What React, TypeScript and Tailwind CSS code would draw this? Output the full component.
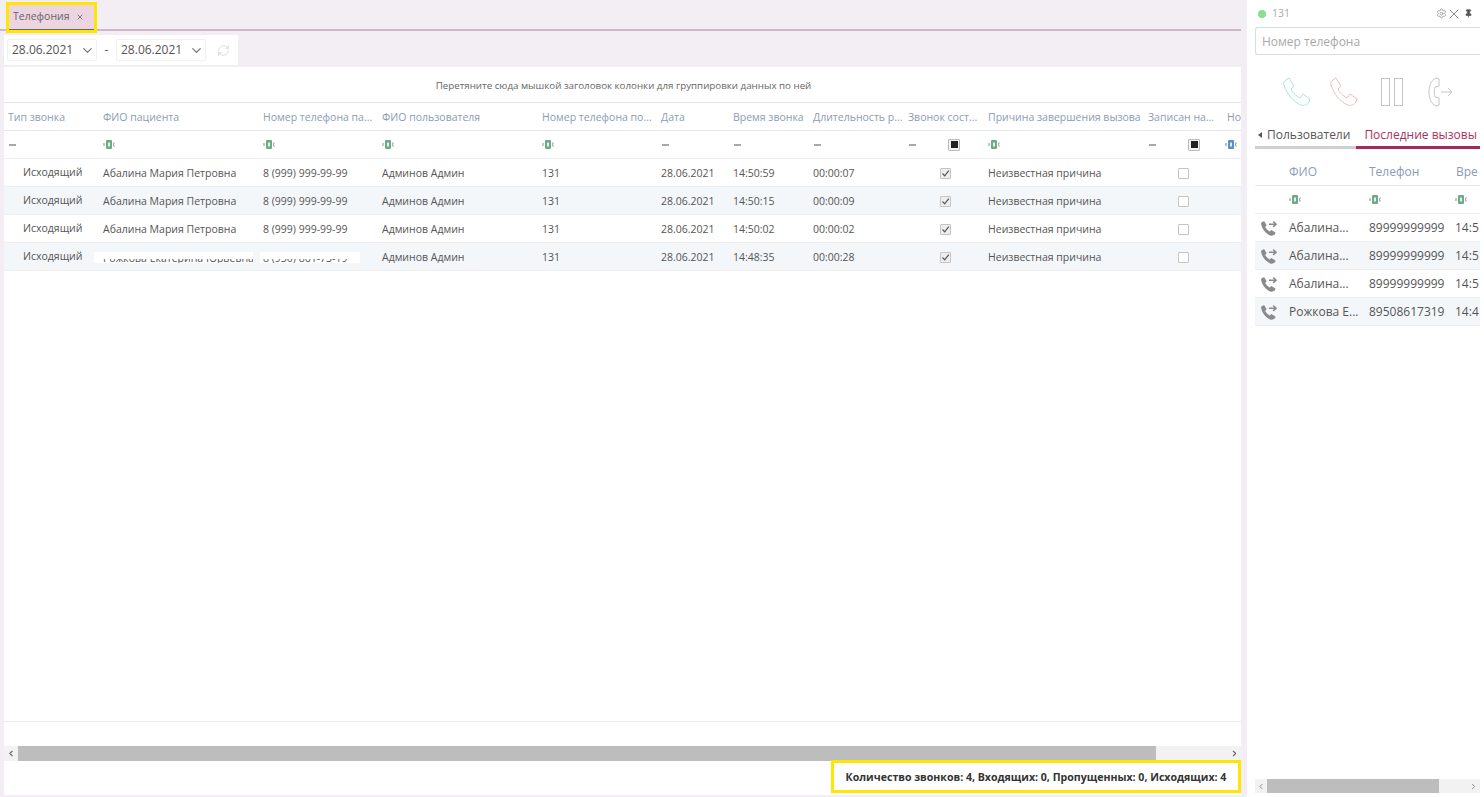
import React from 'react';
import { ChevronDown, ChevronLeft, ChevronRight, Pin, RefreshCw, Settings, X } from 'lucide-react';

const cols = 'grid grid-cols-[95px_160px_119px_160px_119px_72px_80px_95px_80px_160px_79px_60px]';
const sideCols = 'grid grid-cols-[30px_80px_88px_40px]';

const headers = [
  'Тип звонка', 'ФИО пациента', 'Номер телефона па...', 'ФИО пользователя', 'Номер телефона по...', 'Дата',
  'Время звонка', 'Длительность р...', 'Звонок сост...', 'Причина завершения вызова', 'Записан на...', 'Но',
];

const calls = [
  { name: 'Абалина Мария Петровна', phone: '8 (999) 999-99-99', time: '14:50:59', len: '00:00:07' },
  { name: 'Абалина Мария Петровна', phone: '8 (999) 999-99-99', time: '14:50:15', len: '00:00:09' },
  { name: 'Абалина Мария Петровна', phone: '8 (999) 999-99-99', time: '14:50:02', len: '00:00:02' },
  { name: 'Рожкова Екатерина Юрьевна', phone: '8 (950) 861-73-19', time: '14:48:35', len: '00:00:28', hidden: true },
];

const recent = [
  { name: 'Абалина...', phone: '89999999999', time: '14:5' },
  { name: 'Абалина...', phone: '89999999999', time: '14:5' },
  { name: 'Абалина...', phone: '89999999999', time: '14:5' },
  { name: 'Рожкова Е...', phone: '89508617319', time: '14:4' },
];

// little "abc" filter glyph
const AbcIcon = ({ color = '#6fa98c' }: { color?: string }) => (
  <svg width="13" height="9" viewBox="0 0 13 9" className="block">
    <rect x="0" y="3" width="2" height="3" fill={color} opacity="0.55" />
    <rect x="3" y="0" width="6" height="9" rx="1" fill={color} />
    <rect x="5" y="2.5" width="2" height="4" fill="#dff0e8" />
    <path d="M12 3 H10.5 V6 H12" fill="none" stroke="#999" strokeWidth="0.8" />
  </svg>
);

const HANDSET = 'M2 8 C1 6 2 4 4 3 L7 1 L12 9 L9 12 C10 15 14 19 18 21 L21 17 L28 22 L27 25 C25 28 22 29 19 28 C11 25 5 17 2 8 Z';

const Handset = ({ color }: { color: string }) => (
  <svg width="30" height="30" viewBox="0 0 30 30" className="block">
    <path d={HANDSET} fill="none" stroke={color} strokeWidth="1" strokeLinejoin="round" />
  </svg>
);

const OutgoingIcon = () => (
  <svg width="18" height="16" viewBox="0 0 30 27" className="block">
    <path d="M2 8 C1 6 2 4 4 3 L7 2 L11 9 L8.5 12 C10 15 13 18 16 19.5 L19 17 L26 21 L25 24 C23 26 20 27 17 26 C10 23 4 16 2 8 Z" fill="#8a8a8a" />
    <path d="M15 7 H26 M22 2.5 L27 7 L22 11.5" fill="none" stroke="#8a8a8a" strokeWidth="2.6" />
  </svg>
);

const Dash = () => <span className="block h-[2px] w-[7px] bg-[#a8a8a8]" />;

const FilterBox = () => (
  <span className="flex h-[12px] w-[12px] items-center justify-center rounded-[1px] border border-[#bbb] bg-[#f4f4f4]">
    <span className="h-[7px] w-[7px] bg-[#222]" />
  </span>
);

const CheckBox = ({ checked }: { checked?: boolean }) => (
  <span className={`-mt-[1px] flex h-[11px] w-[11px] items-center justify-center rounded-[1px] border border-[#c4c4c4] ${checked ? 'bg-[#eeeeee]' : 'bg-white'}`}>
    {checked && (
      <svg width="9" height="9" viewBox="0 0 9 9">
        <path d="M1.5 4.5 L3.7 6.8 L7.8 1.6" fill="none" stroke="#555" strokeWidth="1.2" />
      </svg>
    )}
  </span>
);

// row where the patient data was painted over in the screenshot
const Masked = ({ text, className }: { text: string; className: string }) => (
  <span className={`relative block h-[11px] overflow-hidden bg-white leading-[13px] whitespace-nowrap ${className}`}>
    {text}
    <span className="absolute inset-x-0 top-0 h-[7px] bg-white" />
  </span>
);

const DateField = ({ value }: { value: string }) => (
  <div className="flex h-[22px] w-[90px] items-center justify-between rounded-[2px] border border-[#f1f1f1] pr-[1px] pl-[4px] text-[12px] text-[#555]">
    {value}
    <ChevronDown size={15} strokeWidth={2} className="text-[#777]" />
  </div>
);

export default function App() {
  return (
    <div className="flex h-[797px] w-[1484px] overflow-hidden bg-[#f3eef4] font-['Open_Sans',sans-serif] text-[10.5px] text-[#555]">
      {/* main area */}
      <div className="flex w-[1241px] flex-col">
        <div className="h-[31px] shrink-0 border-b-2 border-[#cbb9c9] pt-[2px] pl-[6px]">
          <div className="relative z-10 flex h-[31px] w-[91px] items-center gap-[6px] border-[3px] border-[#ffe600] bg-[#ecd5e0] pb-[2px] pl-[4px] text-[10.5px] text-[#666] shadow-[inset_0_-1px_0_#666]">
            Телефония
            <X size={8} strokeWidth={3} className="text-[#777]" />
          </div>
        </div>

        <div className="mt-[4px] ml-[4px] flex h-[30px] w-[234px] shrink-0 items-center bg-white pl-[3px]">
          <DateField value="28.06.2021" />
          <span className="w-[19px] text-center text-[12px]">-</span>
          <DateField value="28.06.2021" />
          <RefreshCw size={13} strokeWidth={1.5} className="ml-[11px] text-[#d4d4d4]" />
        </div>

        <div className="mt-[2px] ml-[4px] flex min-h-0 flex-1 flex-col overflow-hidden bg-white">
          <div className="flex h-[36px] shrink-0 items-center justify-center border-b border-[#e6e6e6] pt-[3px] pl-[2px] text-[9.75px] text-[#666]">
            Перетяните сюда мышкой заголовок колонки для группировки данных по ней
          </div>

          <div className={`${cols} h-[28px] shrink-0 items-center border-b border-[#e8e8e8] pt-[2px] text-[#8c9cb6]`}>
            {headers.map((h, i) => (
              <div key={i} className="pl-[4px] whitespace-nowrap">{h}</div>
            ))}
          </div>

          <div className={`${cols} h-[28px] shrink-0 items-center border-b border-[#eeeeee]`}>
            <div className="pl-[5px]"><Dash /></div>
            <div className="pl-[4px]"><AbcIcon /></div>
            <div className="pl-[4px]"><AbcIcon /></div>
            <div className="pl-[4px]"><AbcIcon /></div>
            <div className="pl-[4px]"><AbcIcon /></div>
            <div className="pl-[5px]"><Dash /></div>
            <div className="pl-[5px]"><Dash /></div>
            <div className="pl-[5px]"><Dash /></div>
            <div className="flex items-center pl-[5px]"><Dash /><span className="ml-[32px]"><FilterBox /></span></div>
            <div className="pl-[4px]"><AbcIcon /></div>
            <div className="flex items-center pl-[5px]"><Dash /><span className="ml-[32px]"><FilterBox /></span></div>
            <div className="pl-[2px]"><AbcIcon color="#5b8fc9" /></div>
          </div>

          {calls.map((c, i) => (
            <div key={i} className={`${cols} h-[28px] shrink-0 items-center border-b border-[#eeeeee] pt-[2px] ${i % 2 ? 'bg-[#f3f7fa]' : 'bg-white'}`}>
              <div className="-mt-[1px] pl-[19px]">Исходящий</div>
              <div className="pl-[4px] whitespace-nowrap">
                {c.hidden ? <Masked text={c.name} className="-ml-[9px] w-[159px] pl-[9px]" /> : c.name}
              </div>
              <div className="pl-[4px] whitespace-nowrap">
                {c.hidden ? <Masked text={c.phone} className="-ml-[3px] w-[100px] pl-[3px]" /> : c.phone}
              </div>
              <div className="pl-[4px]">Админов Админ</div>
              <div className="pl-[4px]">131</div>
              <div className="pl-[4px]">28.06.2021</div>
              <div className="pl-[4px]">{c.time}</div>
              <div className="pl-[4px]">{c.len}</div>
              <div className="flex justify-center pl-[3px]"><CheckBox checked /></div>
              <div className="pl-[4px]">Неизвестная причина</div>
              <div className="flex justify-center"><CheckBox /></div>
              <div />
            </div>
          ))}

          <div className="flex-1" />

          <div className="h-[25px] shrink-0 border-t border-[#ececec]" />

          <div className="flex h-[15px] shrink-0 items-center bg-[#f2f2f2]">
            <ChevronLeft size={9} strokeWidth={3} className="mx-[2px] w-[10px] text-[#666]" />
            <div className="h-full w-[1138px] bg-[#bdbdbd]" />
            <div className="flex-1" />
            <ChevronRight size={9} strokeWidth={3} className="mr-[2px] text-[#666]" />
          </div>

          <div className="flex h-[34px] shrink-0 justify-end">
            <div className="-mt-[1px] flex h-[33px] w-[410px] items-center justify-center border-[3px] border-[#ffe600] pt-[3px] text-[10.6px] font-bold text-[#333]">
              Количество звонков: 4, Входящих: 0, Пропущенных: 0, Исходящих: 4
            </div>
          </div>
        </div>
        <div className="h-[2px] shrink-0" />
      </div>

      {/* softphone panel */}
      <div className="ml-[6px] flex w-[237px] flex-col bg-white pr-[4px] pl-[8px]">
        <div className="flex h-[27px] shrink-0 items-center pl-[3px]">
          <span className="h-[8px] w-[8px] rounded-full bg-[#86e08d]" />
          <span className="ml-[6px] text-[10.5px] text-[#aaa]">131</span>
          <span className="mr-[7px] ml-auto flex items-center text-[#888]">
            <Settings size={11} strokeWidth={1.5} />
            <X size={16} strokeWidth={1.5} className="mx-[-1px]" />
            <Pin size={9} fill="currentColor" className="ml-[3px] text-[#555]" />
          </span>
        </div>

        <div className="flex h-[28px] shrink-0 items-center rounded-l-[3px] border-y border-l border-[#dcdcdc] pt-[2px] pl-[6px] text-[12px] text-[#a8a8a8]">
          Номер телефона
        </div>

        <div className="flex h-[52px] shrink-0 items-center pt-[22px] pl-[27px]">
          <Handset color="#a6e6da" />
          <span className="ml-[17px]"><Handset color="#f5bcb5" /></span>
          <span className="ml-[22px] flex gap-[4px]">
            <span className="h-[28px] w-[9px] border border-[#c6c6c6]" />
            <span className="h-[28px] w-[9px] border border-[#c6c6c6]" />
          </span>
          <svg width="26" height="30" viewBox="0 0 26 30" className="ml-[25px]">
            <path d="M8 1 C3 3 1 9 1 15 C1 21 3 27 8 29 L11 28 L11 21 L7 20 C6 17 6 13 7 10 L11 9 L11 2 Z" fill="none" stroke="#c6c6c6" strokeWidth="1" />
            <path d="M13 15 H24 M20 11 L24 15 L20 19" fill="none" stroke="#c6c6c6" strokeWidth="1" />
          </svg>
        </div>

        <div className="mt-[18px] flex h-[21px] shrink-0 items-center overflow-hidden pb-[2px] text-[12px] whitespace-nowrap">
          <span className="ml-[3px] h-0 w-0 border-y-[3.5px] border-r-[4px] border-y-transparent border-r-[#555]" />
          <span className="ml-[5px] text-[#555]">Пользователи</span>
          <span className="ml-[14px] text-[#a8325f]">Последние вызовы</span>
        </div>
        <div className="flex h-[3px] shrink-0">
          <div className="w-[101px] bg-[#cfcfcf]" />
          <div className="flex-1 bg-[#a32a5b]" />
        </div>

        <div className={`${sideCols} mt-[10px] h-[27px] shrink-0 items-center overflow-hidden border-b border-[#e8e8e8] text-[12px] whitespace-nowrap text-[#8c9cb6]`}>
          <div />
          <div className="pl-[4px]">ФИО</div>
          <div className="pl-[4px]">Телефон</div>
          <div className="pl-[3px]">Вре</div>
        </div>
        <div className={`${sideCols} h-[28px] shrink-0 items-center border-b border-[#eeeeee]`}>
          <div />
          <div className="pl-[4px]"><AbcIcon /></div>
          <div className="pl-[4px]"><AbcIcon /></div>
          <div className="pl-[2px]"><AbcIcon /></div>
        </div>
        {recent.map((r, i) => (
          <div key={i} className={`${sideCols} h-[28px] shrink-0 items-center overflow-hidden border-b border-[#eeeeee] pt-[1px] text-[12px] ${i % 2 ? 'bg-[#f3f7fa]' : 'bg-white'}`}>
            <div className="-mt-[1px] pl-[5px]"><OutgoingIcon /></div>
            <div className="pl-[4px] whitespace-nowrap">{r.name}</div>
            <div className="pl-[4px]">{r.phone}</div>
            <div className="pl-[2px]">{r.time}</div>
          </div>
        ))}

        <div className="flex-1" />
        <div className="mb-[4px] flex h-[14px] shrink-0 items-center bg-[#f2f2f2]">
          <ChevronLeft size={9} strokeWidth={2.5} className="mx-[1px] w-[10px] text-[#888]" />
          <div className="h-full w-[172px] bg-[#bdbdbd]" />
          <div className="flex-1" />
          <ChevronRight size={9} strokeWidth={2.5} className="mr-[2px] text-[#888]" />
        </div>
      </div>
    </div>
  );
}
